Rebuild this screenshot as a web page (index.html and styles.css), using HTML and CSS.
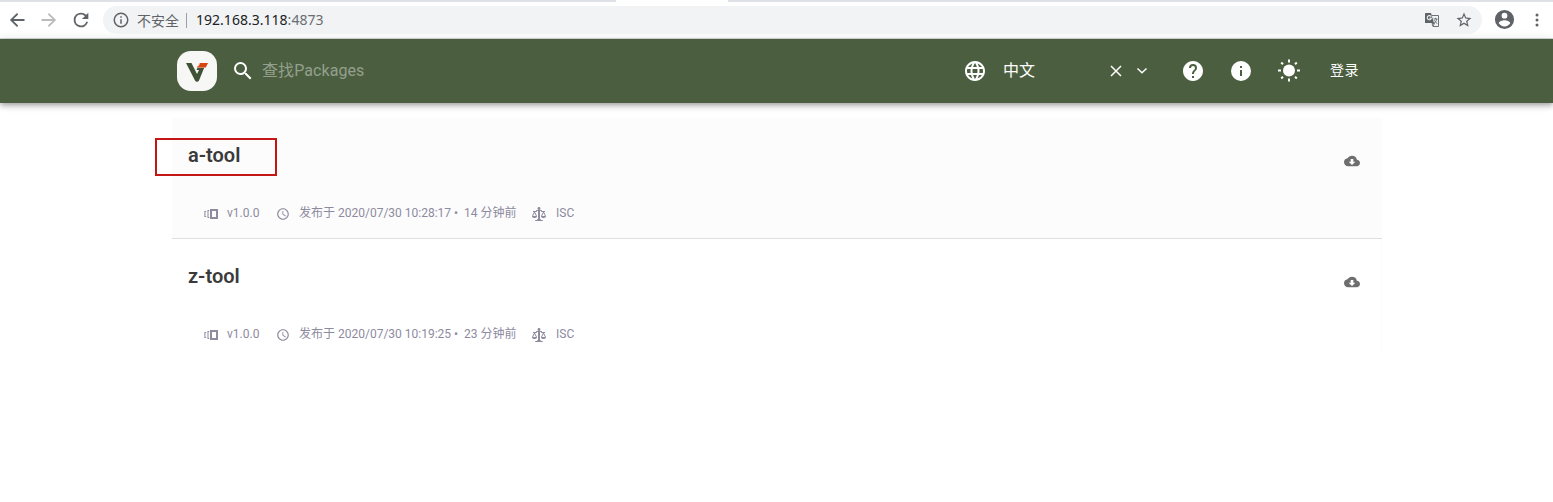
FILE: index.html
```
<!DOCTYPE html>
<html lang="zh-CN">
<head>
<meta charset="utf-8">
<title>Verdaccio</title>
<link rel="stylesheet" href="styles.css">
</head>
<body>
<svg class="defs" width="0" height="0">
  <symbol id="version" viewBox="0 0 14 14"><path d="M6 2h8v10H6zM8 4v6h4V4z" fill-rule="evenodd"/><path d="M5.200 3H3.500v8h1.700v-1H4.500V4h.7zM2.200 4H.4v6h1.800V9h-.8V5h.8z"/></symbol>
  <symbol id="clock" viewBox="0 0 24 24"><path d="M12 2C6.500 2 2 6.500 2 12s4.500 10 10 10 10-4.500 10-10S17.500 2 12 2zm0 18a8 8 0 1 1 0-16 8 8 0 0 1 0 16zm.5-13H11v6l5.200 3.200.8-1.300-4.500-2.700V7z"/></symbol>
  <symbol id="law" viewBox="0 0 14 16"><path fill-rule="evenodd" d="M7 4c-.83 0-1.500-.67-1.500-1.500S6.170 1 7 1s1.500.67 1.500 1.500S7.830 4 7 4zm7 6c0 1.110-.89 2-2 2h-1c-1.110 0-2-.89-2-2l2-4h-1c-.55 0-1-.45-1-1H8v8c.42 0 1 .45 1 1h1c.42 0 1 .45 1 1H3c0-.55.58-1 1-1h1c0-.55.58-1 1-1h.03L6 5H5c0 .55-.45 1-1 1H3l2 4c0 1.110-.89 2-2 2H2c-1.110 0-2-.89-2-2l2-4H1V5h3c0-.55.45-1 1-1h4c.55 0 1 .45 1 1h3v1h-1l2 4zM2.500 7L1 10h3L2.500 7zM13 10l-1.500-3-1.500 3h3z"/></symbol>
  <symbol id="cloud" viewBox="0 0 24 24"><path d="M19.350 10.040A7.490 7.490 0 0 0 12 4C9.110 4 6.600 5.640 5.350 8.040A5.994 5.994 0 0 0 0 14c0 3.310 2.690 6 6 6h13c2.760 0 5-2.240 5-5 0-2.640-2.050-4.780-4.650-4.960zM17 13l-5 5-5-5h3V9h4v4h3z"/></symbol>
</svg>

<div class="browser">
  <div class="tabs"><span class="tab"></span></div>
  <div class="toolbar">
    <svg class="nav back" viewBox="0 0 24 24"><path d="M21 10.900H7.830l5.590-5.490L12 3.500 3.500 12l8.500 8.500 1.410-1.910L7.830 13.100H21z"/></svg>
    <svg class="nav forward" viewBox="0 0 24 24"><path d="M12 3.500l-1.410 1.910L16.170 10.900H3v2.200h13.170l-5.580 5.490L12 20.500l8.500-8.500z"/></svg>
    <svg class="nav reload" viewBox="0 0 24 24"><path d="M17.650 6.350A7.960 7.960 0 0 0 12 4a8 8 0 1 0 7.730 10h-2.080A6 6 0 1 1 12 6c1.660 0 3.140.69 4.220 1.780L13 11h7V4l-2.350 2.350z"/></svg>
    <div class="address">
      <svg class="secure" viewBox="0 0 24 24"><path d="M11 17h2v-6h-2v6zm1-15a10 10 0 1 0 0 20 10 10 0 0 0 0-20zm0 18a8 8 0 1 1 0-16 8 8 0 0 1 0 16zM11 9h2V7h-2v2z"/></svg>
      <span class="warning">不安全</span>
      <span class="divider"></span>
      <span class="url">192.168.3.118<span class="port">:4873</span></span>
      <svg class="translate" viewBox="0 0 16 16"><path fill="#5f6368" d="M1.500 1H7l3 10H1.500Q1 11 1 10.500v-9Q1 1 1.500 1z"/><path fill="none" stroke="#f1f3f4" stroke-width="1.100" d="M7.200 4.700A2.100 2.100 0 1 0 7.400 6.200H5.300"/><path fill="none" stroke="#6d7175" d="M8 3.500h6.500v11H9L8 11.500M9.500 7h4M11.500 5.800V7M12.800 7c-.4 2-1.500 3.500-3 4.300M10.300 8.300l2.700 3.400M8 11.500h2.500L9 14"/></svg>
      <svg class="star" viewBox="0 0 24 24"><path d="M22 9.240l-7.190-.62L12 2 9.190 8.630 2 9.240l5.460 4.730L5.820 21 12 17.270 18.180 21l-1.630-7.030L22 9.240zM12 15.400l-3.760 2.270 1-4.280-3.320-2.880 4.380-.38L12 6.100l1.710 4.040 4.380.38-3.320 2.880 1 4.280L12 15.400z"/></svg>
    </div>
    <svg class="profile" viewBox="0 0 24 24"><path d="M12 2a10 10 0 1 0 0 20 10 10 0 0 0 0-20zm0 3a3 3 0 1 1 0 6 3 3 0 0 1 0-6zm0 14.200a7.200 7.200 0 0 1-6-3.220c.03-1.990 4-3.080 6-3.080s5.970 1.090 6 3.080a7.200 7.200 0 0 1-6 3.220z"/></svg>
    <svg class="more" viewBox="0 0 4 14"><circle cx="2" cy="2" r="1.500"/><circle cx="2" cy="7" r="1.500"/><circle cx="2" cy="12" r="1.500"/></svg>
  </div>
</div>

<header class="header">
  <svg class="logo" viewBox="0 0 40 40"><rect width="40" height="40" rx="14" fill="#f7f8f6"/><path fill="#405236" d="M9 12h5.500l5.500 11 2-4h-2.500l1-2.200h6.700L22 29.500q-.6 1.300-2 1.300t-2-1.300z"/><path fill="#d8440c" d="M22.500 12H31l-2.200 4.500h-9l.6-1.300h1.500l.4-.8h-1l.5-1h1.200z"/></svg>
  <svg class="search-icon" viewBox="0 0 24 24"><path d="M15.500 14h-.79l-.28-.27A6.471 6.471 0 0 0 16 9.500 6.500 6.500 0 1 0 9.500 16c1.610 0 3.090-.59 4.230-1.570l.27.28v.79l5 4.990L20.490 19l-4.990-5zm-6 0a4.500 4.500 0 1 1 0-9 4.500 4.500 0 0 1 0 9z"/></svg>
  <span class="search">查找Packages</span>
  <svg class="icon globe" viewBox="0 0 24 24"><path d="M11.990 2C6.470 2 2 6.480 2 12s4.470 10 9.990 10C17.520 22 22 17.520 22 12S17.520 2 11.990 2zm6.930 6h-2.950a15.650 15.650 0 0 0-1.380-3.560A8.030 8.030 0 0 1 18.920 8zM12 4.040c.83 1.200 1.480 2.530 1.910 3.960h-3.820c.43-1.430 1.080-2.760 1.910-3.960zM4.260 14C4.100 13.360 4 12.690 4 12s.1-1.360.26-2h3.380c-.08.66-.14 1.320-.14 2s.06 1.340.14 2H4.260zm.82 2h2.950c.32 1.250.78 2.450 1.380 3.560A7.987 7.987 0 0 1 5.080 16zm2.950-8H5.080a7.987 7.987 0 0 1 4.330-3.560A15.650 15.650 0 0 0 8.030 8zM12 19.960c-.83-1.200-1.480-2.530-1.910-3.960h3.820c-.43 1.430-1.080 2.760-1.910 3.960zM14.340 14H9.660c-.09-.66-.16-1.320-.16-2s.07-1.350.16-2h4.680c.09.65.16 1.320.16 2s-.07 1.340-.16 2zm.25 5.560c.6-1.110 1.060-2.310 1.380-3.560h2.950a8.030 8.030 0 0 1-4.330 3.560zM16.360 14c.08-.66.14-1.320.14-2s-.06-1.340-.14-2h3.380c.16.640.26 1.310.26 2s-.1 1.360-.26 2h-3.380z"/></svg>
  <span class="language">中文</span>
  <svg class="clear" viewBox="0 0 12 12"><path d="M1 1l10 10M11 1L1 11"/></svg>
  <svg class="chevron" viewBox="0 0 12 8"><path d="M1.500 1.500L6 5.800l4.500-4.300"/></svg>
  <svg class="icon help" viewBox="0 0 24 24"><path d="M12 2C6.480 2 2 6.480 2 12s4.480 10 10 10 10-4.480 10-10S17.520 2 12 2zm1 17h-2v-2h2v2zm2.070-7.750l-.9.920C13.450 12.900 13 13.500 13 15h-2v-.5c0-1.100.45-2.100 1.170-2.830l1.240-1.260c.37-.36.59-.86.59-1.410a2 2 0 0 0-4 0H8a4 4 0 0 1 8 0c0 .88-.36 1.680-.93 2.250z"/></svg>
  <svg class="icon info" viewBox="0 0 24 24"><path d="M12 2a10 10 0 1 0 0 20 10 10 0 0 0 0-20zm1 15h-2v-6h2v6zm0-8h-2V7h2v2z"/></svg>
  <svg class="icon sun" viewBox="0 0 24 24"><circle cx="12" cy="11.500" r="6"/><path d="M11 .6h2v2.900h-2zM11 19.500h2v2.900h-2zM1 10.500h3v2H1zM20 10.500h3v2h-3zM3.500 4.200l1.400-1.400 1.800 1.800L5.300 6zM17.300 4.600l1.800-1.800 1.400 1.400L18.700 6zM3.500 18.800L5.300 17l1.400 1.400-1.800 1.800zM17.300 18.400l1.400-1.400 1.800 1.800-1.400 1.400z"/></svg>
  <span class="login">登录</span>
</header>

<main class="packages">
  <article class="package">
    <div class="title-row">
      <h2 class="name highlighted">a-tool</h2>
      <svg class="download"><use href="#cloud"/></svg>
    </div>
    <div class="meta">
      <svg class="version-icon"><use href="#version"/></svg><span class="version">v1.0.0</span>
      <svg class="clock-icon"><use href="#clock"/></svg><span class="published">发布于 2020/07/30 10:28:17</span><span class="dot">•</span><span class="ago">14 分钟前</span>
      <svg class="law-icon"><use href="#law"/></svg><span class="license">ISC</span>
    </div>
  </article>
  <article class="package">
    <div class="title-row">
      <h2 class="name">z-tool</h2>
      <svg class="download"><use href="#cloud"/></svg>
    </div>
    <div class="meta">
      <svg class="version-icon"><use href="#version"/></svg><span class="version">v1.0.0</span>
      <svg class="clock-icon"><use href="#clock"/></svg><span class="published">发布于 2020/07/30 10:19:25</span><span class="dot">•</span><span class="ago">23 分钟前</span>
      <svg class="law-icon"><use href="#law"/></svg><span class="license">ISC</span>
    </div>
  </article>
</main>
</body>
</html>
```
FILE: styles.css
```
* { box-sizing: border-box; }
body { margin: 0; height: 502px; overflow: hidden; background: #fff; font-family: Roboto, "Noto Sans CJK SC", sans-serif; }
svg { display: block; flex: none; fill: currentColor; }
span { white-space: nowrap; }
.defs { position: absolute; }

.browser { height: 39px; border-bottom: 1px solid #d5d8db; color: #5f6368; }
.tabs { height: 2px; background: #dee1e6; display: flex; padding-left: 616px; }
.tab { width: 112px; background: #fff; }
.toolbar { height: 35px; display: flex; align-items: center; padding-left: 7px; }
.nav { width: 20px; height: 20px; }
.forward { margin-left: 12px; color: #babcbe; }
.reload { margin-left: 11px; width: 22px; height: 22px; }
.address { width: 1379px; height: 28px; margin: 1px 0 0 11px; border-radius: 14px; background: #f1f3f4; display: flex; align-items: center; font-family: "Noto Sans", "Noto Sans CJK SC", sans-serif; font-size: 14px; }
.secure { width: 18px; height: 18px; margin-left: 9px; }
.warning { margin: -1px 0 0 7px; width: 43px; font-family: "Noto Sans CJK SC", sans-serif; line-height: 20px; }
.divider { width: 1px; height: 15px; margin-left: 6px; background: #9aa0a6; }
.url { width: 129px; margin: -2px 0 0 9px; color: #202124; letter-spacing: .02px; }
.port { color: #6a6e73; }
.translate { width: 16px; height: 16px; margin-left: 1099px; }
.star { width: 18px; height: 18px; margin-left: 15px; }
.profile { width: 23px; height: 23px; margin-left: 11px; }
.more { width: 4px; height: 14px; margin: 1px 0 0 19px; }

.header { height: 64px; padding-left: 177px; display: flex; align-items: center; background: #4b5e40; color: #fff; box-shadow: 0 2px 4px -1px rgba(0,0,0,.2), 0 4px 5px rgba(0,0,0,.14), 0 1px 10px rgba(0,0,0,.12); }
.logo { width: 40px; height: 40px; }
.search-icon { width: 24px; height: 24px; margin-left: 14px; }
.search { width: 110px; margin-left: 7px; font-size: 16px; line-height: 24px; letter-spacing: .08px; color: #94a08d; }
.icon { width: 24px; height: 24px; }
.globe { margin-left: 591px; }
.language { width: 34px; margin-left: 16px; font-size: 16px; line-height: 24px; }
.clear { width: 12px; height: 12px; margin-left: 73px; }
.chevron { width: 12px; height: 8px; margin-left: 14px; }
.clear, .chevron { fill: none; stroke: #fff; stroke-width: 1.5; }
.help { margin-left: 33px; }
.info, .sun { margin-left: 24px; }
.login { margin: -2px 0 0 29px; font-size: 14px; line-height: 20px; letter-spacing: .4px; }

.packages { width: 1210px; margin: 15px 0 0 172px; }
.package { height: 121px; padding: 20px 22px 0 16px; background: #fcfcfc; }
.package + .package { height: 114px; background: #fff; border-right: 1px solid #fcfcfc; padding-right: 21px; }
.package:first-child { border-bottom: 1px solid #dfdfdf; }
.title-row { height: 38px; display: flex; justify-content: space-between; }
.name { margin: 0; font-size: 20px; line-height: 34px; font-weight: 600; color: #3a3a3a; }
.highlighted { width: 122px; height: 38px; margin-left: -33px; padding-left: 31px; border: 2px solid #c51616; line-height: 30px; }
.download { width: 16px; height: 16px; margin-top: 15px; color: #6e6e6e; }
.meta { height: 18px; margin: 28px 0 0 16px; display: flex; align-items: center; font-size: 12px; line-height: 18px; color: #8e8aa0; }
.version-icon, .clock-icon, .law-icon { width: 14px; height: 14px; margin-top: 2px; }
.version { width: 33px; margin-left: 9px; }
.clock-icon { margin-left: 16px; }
.published { width: 153px; margin-left: 9px; }
.dot { width: 5px; margin-left: 2px; }
.ago { width: 54px; margin-left: 5px; }
.law-icon { height: 16px; margin: 1px 0 0 14px; }
.license { margin-left: 10px; }
```
